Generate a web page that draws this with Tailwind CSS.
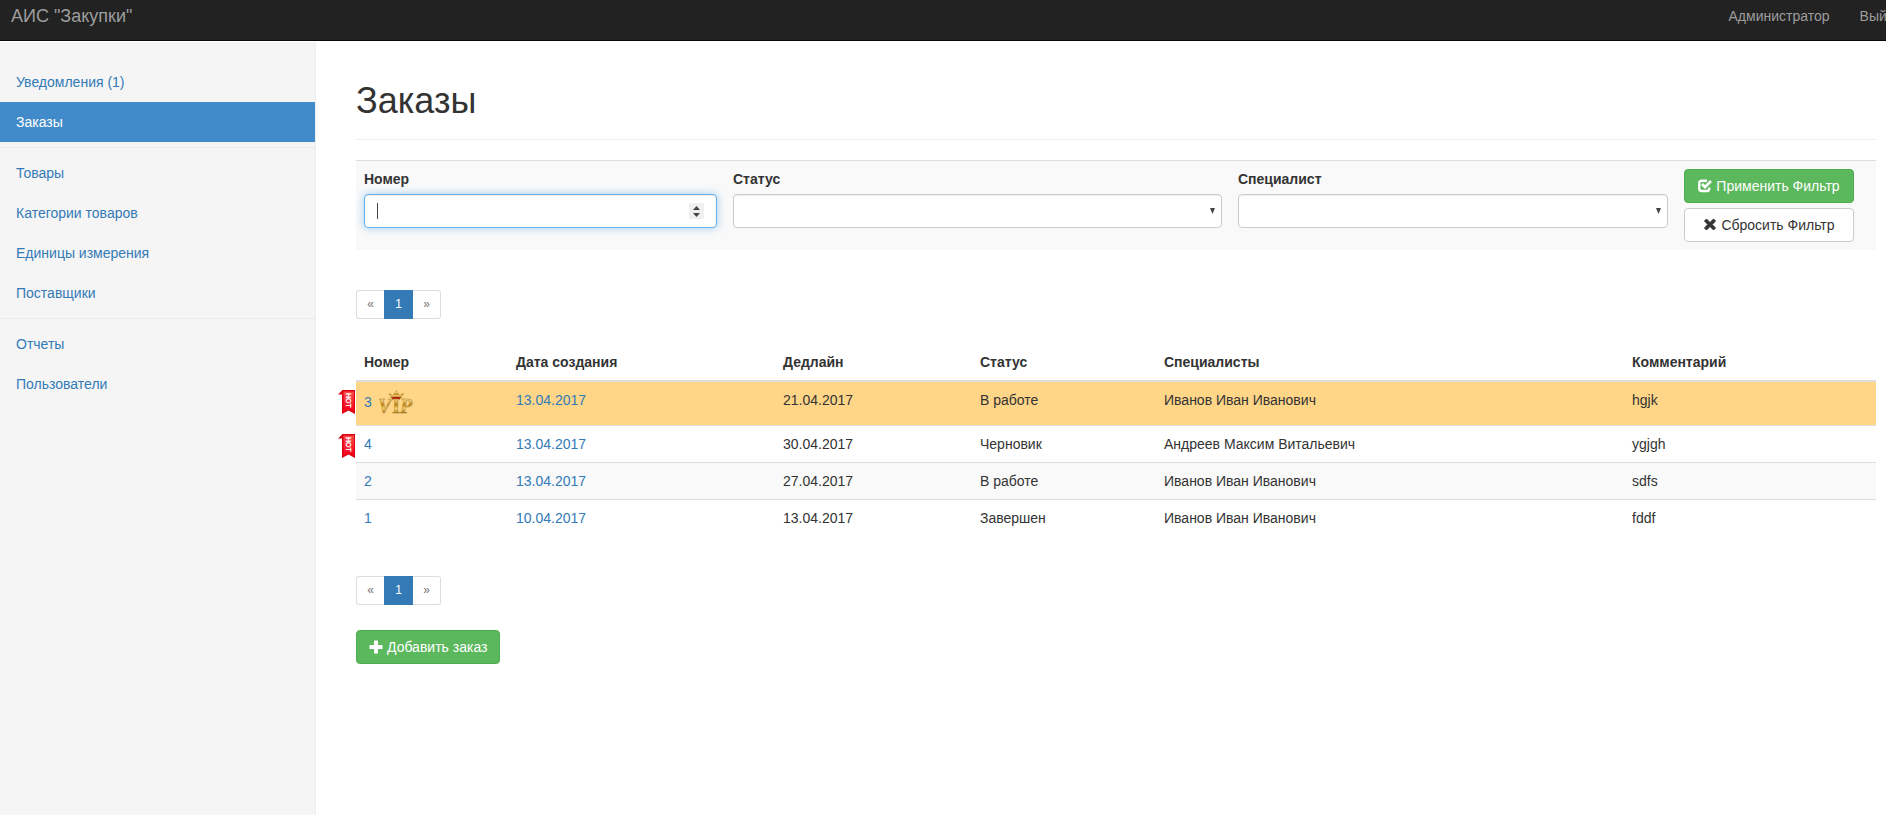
<!DOCTYPE html>
<html lang="ru">
<head>
<meta charset="utf-8">
<title>АИС "Закупки"</title>
<script src="https://cdn.jsdelivr.net/npm/@tailwindcss/browser@4"></script>
</head>
<body class="flex min-h-screen flex-col overflow-x-hidden bg-white font-['Liberation_Sans',Arial,sans-serif] text-sm text-[#333]">

<svg class="absolute size-0" aria-hidden="true">
  <defs>
    <linearGradient id="gold" x1="0" y1="0" x2="0" y2="1">
      <stop offset="0.2" stop-color="#fbe08a"/><stop offset="0.45" stop-color="#b88018"/>
      <stop offset="0.6" stop-color="#f6d574"/><stop offset="0.85" stop-color="#96640f"/>
    </linearGradient>
    <linearGradient id="red" x1="0" y1="0" x2="0" y2="1">
      <stop offset="0" stop-color="#ff4a4a"/><stop offset="1" stop-color="#f4001a"/>
    </linearGradient>
  </defs>
</svg>

<header class="flex h-[41px] justify-between border-b border-[#080808] bg-[#222] text-[#9d9d9d]">
  <a href="#" class="px-[11px] pt-1.5 text-lg leading-5">АИС "Закупки"</a>
  <nav class="-mr-[30px] flex">
    <a href="#" class="px-[15px] pt-1.5 leading-5">Администратор</a>
    <a href="#" class="px-[15px] pt-1.5 leading-5">Выйти</a>
  </nav>
</header>

<div class="flex flex-1 pt-px">
  <aside class="w-[316px] shrink-0 border-r border-[#eee] bg-[#f5f5f5] pt-5 leading-5 text-[#337ab7]">
    <nav>
      <a href="#" class="block px-4 py-2.5">Уведомления (1)</a>
      <a href="#" class="block bg-[#428bca] px-4 py-2.5 text-white">Заказы</a>
      <hr class="my-[5px] border-[#eaeaea]">
      <a href="#" class="block px-4 py-2.5">Товары</a>
      <a href="#" class="block px-4 py-2.5">Категории товаров</a>
      <a href="#" class="block px-4 py-2.5">Единицы измерения</a>
      <a href="#" class="block px-4 py-2.5">Поставщики</a>
      <hr class="my-[5px] border-[#eaeaea]">
      <a href="#" class="block px-4 py-2.5">Отчеты</a>
      <a href="#" class="block px-4 py-2.5">Пользователи</a>
    </nav>
  </aside>

  <main class="min-w-0 flex-1 pt-[39px] pr-2.5 pl-10">
    <h1 class="border-b border-[#eee] pb-[19px] text-4xl leading-[39px]">Заказы</h1>

    <form class="mt-5 grid grid-cols-[369fr_505fr_446fr_200fr] border-t border-[#ddd] bg-[#f9f9f9] leading-5">
      <div class="p-2">
        <label for="number" class="mb-[5px] block font-bold">Номер</label>
        <div class="relative">
          <input id="number" type="number" class="block h-[34px] w-full appearance-none rounded border border-[#66afe9] bg-white px-3 text-[#555] caret-transparent shadow-[inset_0_1px_1px_rgba(0,0,0,0.075),0_0_8px_rgba(102,175,233,0.6)] outline-none [-moz-appearance:textfield]">
          <span class="absolute top-[9px] left-[13px] h-4 w-px bg-[#444]"></span>
          <svg class="absolute top-[9px] right-[13px] h-4 w-[15px] bg-[#f0f0f0]" viewBox="0 0 15 16" aria-hidden="true"><path d="M4 7 L7.500 3 L11 7Z M4 10 L7.500 14 L11 10Z" fill="#444"/></svg>
        </div>
      </div>
      <div class="p-2">
        <label for="status" class="mb-[5px] block font-bold">Статус</label>
        <div class="relative">
          <select id="status" class="block h-[34px] w-full appearance-none rounded border border-[#ccc] bg-white px-3 shadow-[inset_0_1px_1px_rgba(0,0,0,0.075)]"><option></option></select>
          <svg class="pointer-events-none absolute top-3.5 right-[7px] h-1.5 w-[5px]" viewBox="0 0 5 6" aria-hidden="true"><path d="M0 0H5L2.500 6Z" fill="#444"/></svg>
        </div>
      </div>
      <div class="p-2">
        <label for="specialist" class="mb-[5px] block font-bold">Специалист</label>
        <div class="relative">
          <select id="specialist" class="block h-[34px] w-full appearance-none rounded border border-[#ccc] bg-white px-3 shadow-[inset_0_1px_1px_rgba(0,0,0,0.075)]"><option></option></select>
          <svg class="pointer-events-none absolute top-3.5 right-[7px] h-1.5 w-[5px]" viewBox="0 0 5 6" aria-hidden="true"><path d="M0 0H5L2.500 6Z" fill="#444"/></svg>
        </div>
      </div>
      <div class="flex flex-col items-start gap-[5px] p-2">
        <button type="submit" class="flex h-[34px] w-[170px] items-center justify-center gap-1 rounded border border-[#4cae4c] bg-[#5cb85c] whitespace-nowrap text-white">
          <svg class="size-3.5 shrink-0" viewBox="0 0 14 14" fill="none" stroke="currentColor" aria-hidden="true"><path d="M9 1.800 H3.500 Q1.300 1.800 1.300 4 V9.800 Q1.300 12 3.500 12 H9 Q11.200 12 11.200 9.800 V8.500" stroke-width="2.400"/><path d="M4 5 L7 8 L13 2" stroke-width="2.800"/></svg>
          Применить Фильтр
        </button>
        <button type="reset" class="flex h-[34px] w-[170px] items-center justify-center gap-1 rounded border border-[#ccc] bg-white whitespace-nowrap">
          <svg class="size-3.5 shrink-0" viewBox="0 0 14 14" aria-hidden="true"><path d="M1.500 3 L3.500 1 L7 4.500 L10.500 1 L12.500 3 L9.200 6.500 L12.500 10 L10.500 12 L7 8.500 L3.500 12 L1.500 10 L4.800 6.500Z" fill="currentColor" stroke="currentColor" stroke-linejoin="round"/></svg>
          Сбросить Фильтр
        </button>
      </div>
    </form>

    <nav aria-label="Страницы" class="mt-10 flex h-[29px] w-[85px] text-center text-xs leading-[27px]">
      <a href="#" class="w-7 rounded-l-[3px] border border-r-0 border-[#ddd] text-[#777]">«</a>
      <a href="#" aria-current="page" class="w-[29px] border border-[#337ab7] bg-[#337ab7] leading-[26px] text-white">1</a>
      <a href="#" class="w-7 rounded-r-[3px] border border-l-0 border-[#ddd] text-[#777]">»</a>
    </nav>

    <table class="mt-[25px] w-full table-fixed text-left leading-5">
      <colgroup><col class="w-[152px]"><col class="w-[267px]"><col class="w-[197px]"><col class="w-[184px]"><col class="w-[468px]"><col class="w-[252px]"></colgroup>
      <thead>
        <tr class="border-b-2 border-[#ddd]">
          <th class="p-2">Номер</th><th class="p-2">Дата создания</th><th class="p-2">Дедлайн</th><th class="p-2">Статус</th><th class="p-2">Специалисты</th><th class="p-2">Комментарий</th>
        </tr>
      </thead>
      <tbody class="divide-y divide-[#ddd] align-top">
        <tr class="bg-[#ffd587]">
          <td class="relative px-2 pt-2">
            <svg class="absolute top-2 -left-[18px] h-6 w-[18px]" viewBox="0 0 18 24" role="img" aria-label="HOT">
              <path d="M0 4.500 L4.500 0 H17 V24 L10.500 20.500 L4 24 V4.500 Z" fill="#dc0010"/>
              <path d="M5.500 1.500 H16 V22 L10.500 19 L5.500 22 Z" fill="url(#red)"/>
              <text transform="translate(8 3) rotate(90)" font-size="7" fill="#fff" stroke="#fff" stroke-width="0.300">HOT</text>
            </svg>
            <div class="flex h-[35px] items-start gap-1.5">
              <a href="#" class="pt-0.5 text-[#337ab7]">3</a>
              <svg class="h-[25px] w-9 overflow-visible" viewBox="0 0 36 25" role="img" aria-label="VIP">
                <g font-family="Liberation Serif" font-weight="bold" fill="url(#gold)" stroke="#a87820" stroke-width="0.400">
                  <text x="0" y="23" font-size="20" font-style="italic">V</text>
                  <text x="14" y="23" font-size="21">I</text>
                  <text x="22" y="23" font-size="20" font-style="italic">P</text>
                </g>
                <path d="M13.500 8 L11 3.500 L15 5.500 L18.500 0.500 L21.500 5.500 L25.500 3.500 L23 8 Q18 10 13.500 8Z" fill="url(#gold)" stroke="#a87820" stroke-width="0.500"/>
                <path d="M14 7.500 Q18 6 22.500 7.500 L22 9 Q18 8 14.500 9Z" fill="#bb1a12"/>
              </svg>
            </div>
          </td>
          <td class="p-2"><a href="#" class="text-[#337ab7]">13.04.2017</a></td><td class="p-2">21.04.2017</td><td class="p-2">В работе</td><td class="p-2">Иванов Иван Иванович</td><td class="p-2">hgjk</td>
        </tr>
        <tr>
          <td class="relative p-2">
            <svg class="absolute top-2 -left-[18px] h-6 w-[18px]" viewBox="0 0 18 24" role="img" aria-label="HOT">
              <path d="M0 4.500 L4.500 0 H17 V24 L10.500 20.500 L4 24 V4.500 Z" fill="#dc0010"/>
              <path d="M5.500 1.500 H16 V22 L10.500 19 L5.500 22 Z" fill="url(#red)"/>
              <text transform="translate(8 3) rotate(90)" font-size="7" fill="#fff" stroke="#fff" stroke-width="0.300">HOT</text>
            </svg>
            <a href="#" class="text-[#337ab7]">4</a>
          </td>
          <td class="p-2"><a href="#" class="text-[#337ab7]">13.04.2017</a></td><td class="p-2">30.04.2017</td><td class="p-2">Черновик</td><td class="p-2">Андреев Максим Витальевич</td><td class="p-2">ygjgh</td>
        </tr>
        <tr class="bg-[#f9f9f9]">
          <td class="p-2"><a href="#" class="text-[#337ab7]">2</a></td>
          <td class="p-2"><a href="#" class="text-[#337ab7]">13.04.2017</a></td><td class="p-2">27.04.2017</td><td class="p-2">В работе</td><td class="p-2">Иванов Иван Иванович</td><td class="p-2">sdfs</td>
        </tr>
        <tr>
          <td class="p-2"><a href="#" class="text-[#337ab7]">1</a></td>
          <td class="p-2"><a href="#" class="text-[#337ab7]">10.04.2017</a></td><td class="p-2">13.04.2017</td><td class="p-2">Завершен</td><td class="p-2">Иванов Иван Иванович</td><td class="p-2">fddf</td>
        </tr>
      </tbody>
    </table>

    <nav aria-label="Страницы" class="mt-10 flex h-[29px] w-[85px] text-center text-xs leading-[27px]">
      <a href="#" class="w-7 rounded-l-[3px] border border-r-0 border-[#ddd] text-[#777]">«</a>
      <a href="#" aria-current="page" class="w-[29px] border border-[#337ab7] bg-[#337ab7] leading-[26px] text-white">1</a>
      <a href="#" class="w-7 rounded-r-[3px] border border-l-0 border-[#ddd] text-[#777]">»</a>
    </nav>

    <button type="button" class="mt-[25px] flex h-[34px] items-center gap-1 rounded border border-[#4cae4c] bg-[#5cb85c] px-3 whitespace-nowrap text-white">
      <svg class="size-3.5" viewBox="0 0 14 14" aria-hidden="true"><path d="M5 0.500H9V5H13.500V9H9V13.500H5V9H0.500V5H5Z" fill="currentColor"/></svg>
      Добавить заказ
    </button>
  </main>
</div>
</body>
</html>
